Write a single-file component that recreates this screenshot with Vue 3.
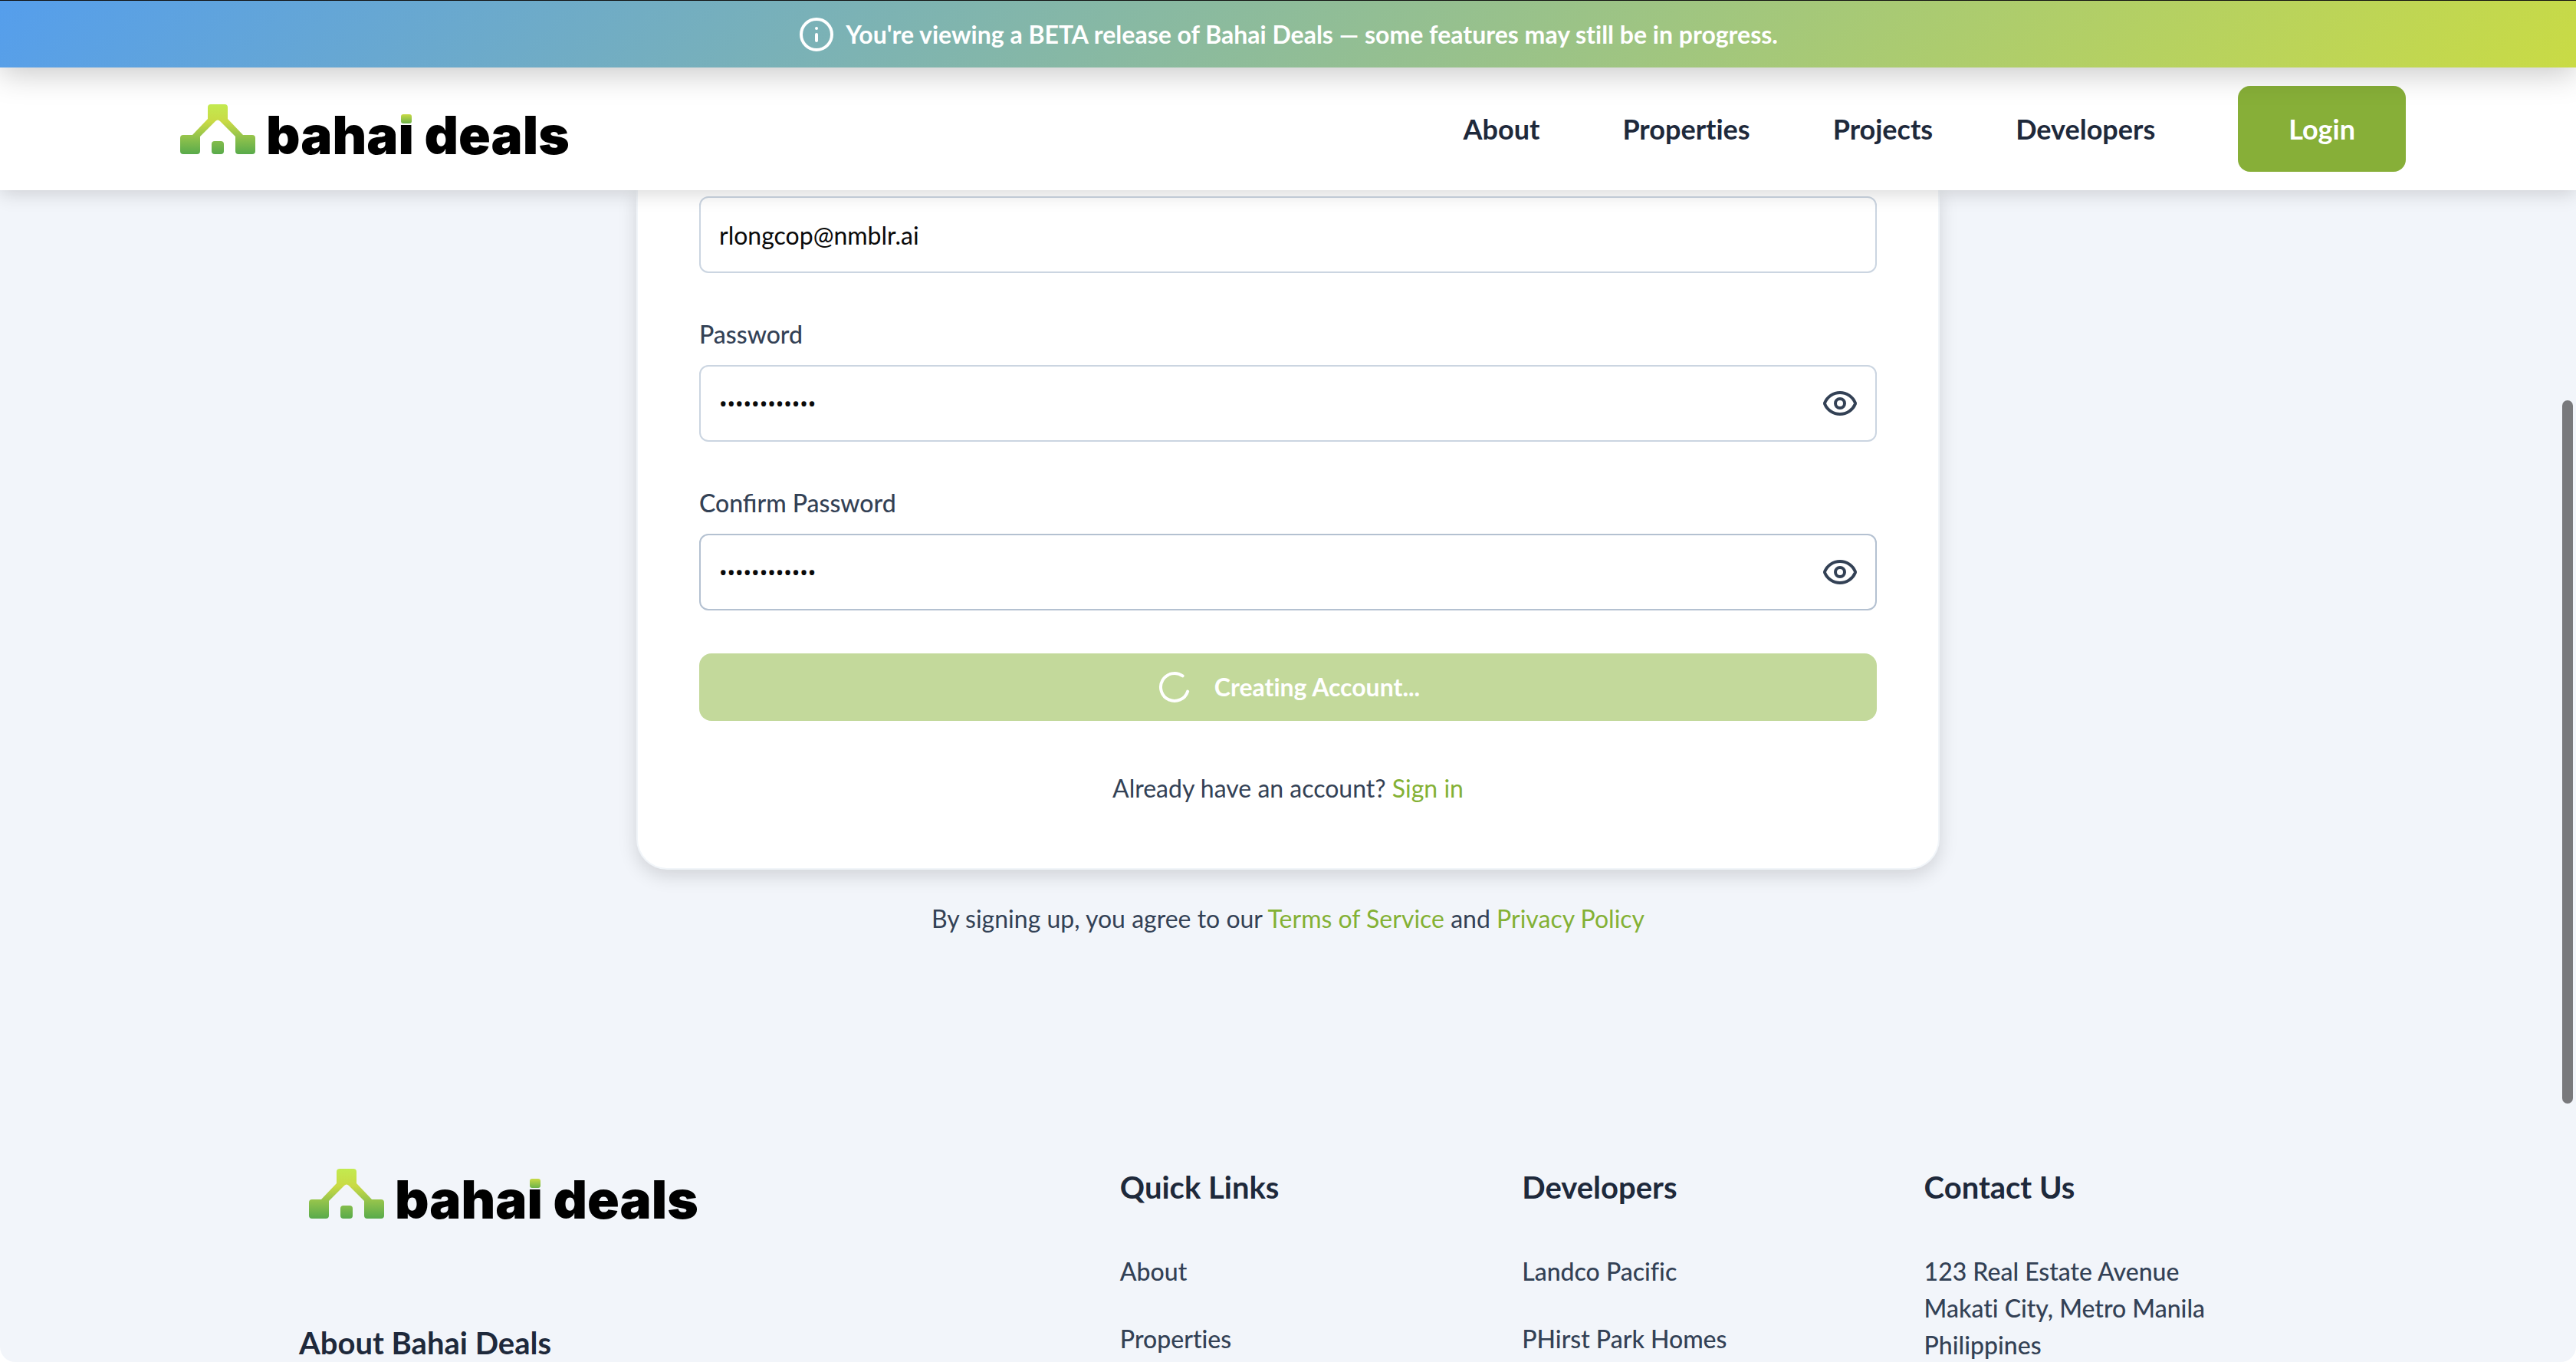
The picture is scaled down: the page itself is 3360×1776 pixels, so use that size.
<script setup>
import { ref, useId } from 'vue'

const email = ref('rlongcop@nmblr.ai')
const password = ref('abcdefghijkl')
const confirmation = ref('abcdefghijkl')
const uid = useId()

const navItems = ['About', 'Properties', 'Projects', 'Developers']
const quickLinks = ['About', 'Properties']
const developers = ['Landco Pacific', 'PHirst Park Homes']
</script>

<template>
  <div class="page">
    <div class="banner" role="status">
      <svg class="icon" viewBox="0 0 24 24" aria-hidden="true">
        <circle cx="12" cy="12" r="10" />
        <path d="M12 16v-4M12 8h.01" />
      </svg>
      <span>You're viewing a BETA release of Bahai Deals — some features may still be in progress.</span>
    </div>

    <header class="header">
      <a class="logo" href="#" aria-label="bahai deals">
        <svg class="mark" viewBox="0 0 98 65" aria-hidden="true">
          <defs>
            <linearGradient :id="uid + 'a'" x1="0" y1="0" x2="0" y2="65" gradientUnits="userSpaceOnUse">
              <stop offset="0" stop-color="#c3ea4f" />
              <stop offset="0.35" stop-color="#c9da45" />
              <stop offset="0.65" stop-color="#93c34c" />
              <stop offset="1" stop-color="#58aa4b" />
            </linearGradient>
          </defs>
          <g :fill="`url(#${uid}a)`">
            <path d="M40 0H58Q62 0 62 4V19L82 40H94Q98 40 98 44V61Q98 65 94 65H76Q72 65 72 61V42L52 22Q49 19 46 22L26 42V61Q26 65 22 65H4Q0 65 0 61V44Q0 40 4 40H16L36 19V4Q36 0 40 0Z" />
            <rect x="41" y="48" width="16" height="17" rx="4" />
          </g>
        </svg>
        <span class="wordmark">baha<span class="accent">i</span> deals</span>
      </a>
      <nav class="nav">
        <a v-for="item in navItems" :key="item" href="#">{{ item }}</a>
        <button class="login" type="button">Login</button>
      </nav>
    </header>

    <main class="main">
      <form class="card" @submit.prevent>
        <div class="field">
          <input id="email" v-model="email" type="email" aria-label="Email" />
        </div>
        <div class="field">
          <label for="password">Password</label>
          <div class="control">
            <input id="password" v-model="password" type="password" />
            <button class="eye" type="button" aria-label="Show password">
              <svg class="icon" viewBox="0 0 24 24" aria-hidden="true">
                <path d="M2.062 12.348a1 1 0 0 1 0-.696 10.75 10.75 0 0 1 19.876 0 1 1 0 0 1 0 .696 10.75 10.75 0 0 1-19.876 0" />
                <circle cx="12" cy="12" r="3" />
              </svg>
            </button>
          </div>
        </div>
        <div class="field">
          <label for="confirmation">Confirm Password</label>
          <div class="control">
            <input id="confirmation" v-model="confirmation" class="active" type="password" />
            <button class="eye" type="button" aria-label="Show password confirmation">
              <svg class="icon" viewBox="0 0 24 24" aria-hidden="true">
                <path d="M2.062 12.348a1 1 0 0 1 0-.696 10.75 10.75 0 0 1 19.876 0 1 1 0 0 1 0 .696 10.75 10.75 0 0 1-19.876 0" />
                <circle cx="12" cy="12" r="3" />
              </svg>
            </button>
          </div>
        </div>
        <button class="submit" type="submit" disabled>
          <svg class="icon" viewBox="0 0 24 24" aria-hidden="true">
            <path d="M21 12a9 9 0 1 1-6.219-8.56" transform="rotate(18 12 12)" />
          </svg>
          <span>Creating Account...</span>
        </button>
        <p class="signin">Already have an account? <a href="#">Sign in</a></p>
      </form>
      <p class="terms">
        By signing up, you agree to our <a href="#">Terms of Service</a> and <a href="#">Privacy Policy</a>
      </p>
    </main>

    <footer class="footer">
      <section>
        <a class="logo" href="#" aria-label="bahai deals">
          <svg class="mark" viewBox="0 0 98 65" aria-hidden="true">
            <g :fill="`url(#${uid}a)`">
              <path d="M40 0H58Q62 0 62 4V19L82 40H94Q98 40 98 44V61Q98 65 94 65H76Q72 65 72 61V42L52 22Q49 19 46 22L26 42V61Q26 65 22 65H4Q0 65 0 61V44Q0 40 4 40H16L36 19V4Q36 0 40 0Z" />
              <rect x="41" y="48" width="16" height="17" rx="4" />
            </g>
          </svg>
          <span class="wordmark">baha<span class="accent">i</span> deals</span>
        </a>
        <h3 class="about">About Bahai Deals</h3>
      </section>
      <section>
        <h3>Quick Links</h3>
        <ul>
          <li v-for="link in quickLinks" :key="link"><a href="#">{{ link }}</a></li>
        </ul>
      </section>
      <section>
        <h3>Developers</h3>
        <ul>
          <li v-for="name in developers" :key="name"><a href="#">{{ name }}</a></li>
        </ul>
      </section>
      <section>
        <h3>Contact Us</h3>
        <address>123 Real Estate Avenue<br />Makati City, Metro Manila<br />Philippines</address>
      </section>
    </footer>

    <div class="scrollbar" aria-hidden="true"></div>
  </div>
</template>

<style>
body {
  margin: 0;
  background: #fff;
}
</style>

<style scoped>
.page {
  position: relative;
  height: 100vh;
  overflow: hidden;
  box-sizing: border-box;
  background: #f2f5fa;
  border-radius: 0 0 20px 20px;
  font-family: Lato, sans-serif;
  font-size: 32px;
  line-height: 48px;
  font-variant-ligatures: none;
  color: #334155;
}
.page *,
.page *::before {
  box-sizing: border-box;
}
a {
  color: inherit;
  text-decoration: none;
}
button,
input {
  font: inherit;
  font-variant-ligatures: none;
  margin: 0;
}
button {
  border: 0;
  padding: 0;
}
h3,
p,
ul {
  margin: 0;
  padding: 0;
}
ul {
  list-style: none;
}
.icon {
  width: 48px;
  height: 48px;
  flex: none;
  display: block;
  fill: none;
  stroke: currentColor;
  stroke-width: 2;
  stroke-linecap: round;
  stroke-linejoin: round;
}
.banner {
  position: relative;
  z-index: 3;
  display: flex;
  align-items: center;
  justify-content: center;
  gap: 14px;
  height: 88px;
  border-top: 1px solid #111;
  background: linear-gradient(135deg, #559eec, #c9db45);
  box-shadow: 0 8px 40px rgba(0, 0, 0, 0.22);
  color: #fff;
  font-weight: 700;
}
.header {
  position: relative;
  z-index: 2;
  display: flex;
  align-items: center;
  justify-content: space-between;
  height: 160px;
  padding: 0 222px;
  background: #fff;
  box-shadow: 0 4px 24px rgba(0, 0, 0, 0.16);
}
.logo {
  display: flex;
  align-items: flex-end;
  gap: 14px;
  padding-left: 13px;
}
.mark {
  width: 98px;
  height: 65px;
  display: block;
}
.wordmark {
  font-family: Inter, sans-serif;
  font-size: 69px;
  line-height: 50px;
  font-weight: 900;
  color: #000;
}
.accent {
  position: relative;
  background: linear-gradient(transparent 29px, #000 29px);
  background-clip: text;
  -webkit-background-clip: text;
  color: transparent;
}
.accent::before {
  content: '';
  position: absolute;
  left: 0;
  right: 0;
  top: 15px;
  width: 14px;
  height: 12px;
  margin: 0 auto;
  border-radius: 3px;
  background: linear-gradient(#c9da45, #6cb34a);
}
.nav {
  display: flex;
  align-items: center;
  gap: 108px;
  font-size: 36px;
  font-weight: 700;
  color: #1e293b;
}
.login {
  height: 112px;
  padding: 0 66px;
  border-radius: 16px;
  background: #87af38;
  color: #fff;
}
.main {
  display: flex;
  flex-direction: column;
  align-items: center;
}
.card {
  width: 100%;
  max-width: 1700px;
  padding: 8px 80px 80px;
  border: 2px solid #f1f5f9;
  border-top: 0;
  border-radius: 0 0 40px 40px;
  background: #fff;
  box-shadow: 0 8px 24px rgba(0, 0, 0, 0.14);
}
.field {
  margin-bottom: 56px;
}
.field label {
  display: block;
  margin-bottom: 16px;
  font-weight: 500;
  font-variant-ligatures: normal;
}
.control {
  position: relative;
}
input {
  display: block;
  width: 100%;
  height: 100px;
  padding: 0 24px;
  border: 2px solid #cbd5e1;
  border-radius: 12px;
  background: #fff;
  color: #0a0a0a;
  outline: none;
}
input[type='password'] {
  font-family: 'Noto Sans', sans-serif;
  font-size: 28px;
}
input.active {
  border-color: #b4c1d1;
}
.eye {
  position: absolute;
  top: 26px;
  right: 24px;
  background: none;
  color: #334155;
}
.submit {
  display: flex;
  align-items: center;
  justify-content: center;
  gap: 28px;
  width: 100%;
  height: 88px;
  border-radius: 16px;
  background: #c3d99b;
  color: #fff;
  font-weight: 700;
}
.signin {
  margin-top: 64px;
  text-align: center;
}
.signin a,
.terms a {
  color: #84b135;
}
.terms {
  margin-top: 40px;
}
.footer {
  display: grid;
  grid-template-columns: 1006fr 460fr 460fr 460fr;
  gap: 64px;
  padding: 302px 390px 0;
}
.footer h3 {
  font-size: 40px;
  line-height: 48px;
  font-weight: 700;
  color: #1e293b;
}
.footer .about {
  margin-top: 138px;
}
.footer ul,
.footer address {
  margin-top: 62px;
  font-style: normal;
  font-weight: 500;
}
.footer li {
  margin-bottom: 40px;
}
.scrollbar {
  position: absolute;
  z-index: 4;
  top: 522px;
  right: 4px;
  width: 14px;
  height: 917px;
  border-radius: 7px;
  background: #79797c;
}
</style>
